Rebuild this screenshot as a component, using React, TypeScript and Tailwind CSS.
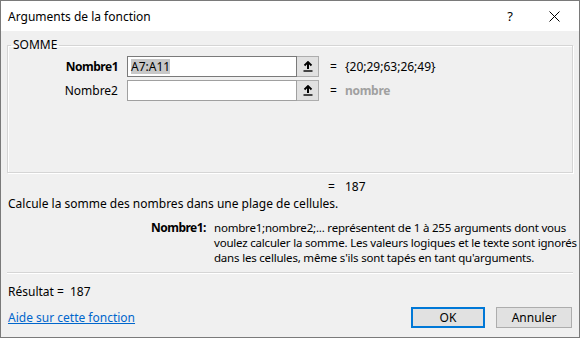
import React from "react";

function UploadIcon() {
  return (
    <svg width="10" height="11" viewBox="0 0 10 11" fill="none">
      <path d="M5 1 L5 8" stroke="#000" strokeWidth="2" />
      <path d="M1.5 4.5 L5 1 L8.5 4.5" stroke="#000" strokeWidth="1.8" fill="none" />
      <path d="M0.5 10 L9.5 10" stroke="#000" strokeWidth="1.4" />
    </svg>
  );
}

function ArgRow({ label, bold, value, selected, result, muted }: { label: string; bold?: boolean; value: string; selected?: boolean; result: string; muted?: boolean }) {
  return (
    <div className="flex items-center h-[21px]">
      <div className={`w-[110px] shrink-0 text-right ${bold ? "font-bold tracking-[-0.5px]" : ""}`}>{label}</div>
      <div className="ml-[9px] flex h-[21px]">
        <div className={`w-[170px] h-[21px] bg-white border ${selected ? "border-[#7a7a7a]" : "border-[#a0a0a0]"} flex items-center pl-[3px]`}>
          {value ? <span className="bg-[#c8c8c8] leading-[15px]">{value}</span> : null}
        </div>
        <div className="w-[22px] h-[21px] bg-[#e1e1e1] border border-[#adadad] border-l-0 flex items-center justify-center">
          <UploadIcon />
        </div>
      </div>
      <div className="ml-[11px] w-[15px]">=</div>
      <div className={muted ? "text-[#a0a0a0] font-bold tracking-[-0.3px]" : ""}>{result}</div>
    </div>
  );
}

export default function App() {
  return (
    <div className="w-[580px] h-[338px] bg-[#f0f0f0] border border-[#7a7a7a] flex flex-col text-[12px] text-black leading-[15px] font-['Noto_Sans',_'Open_Sans',_sans-serif] overflow-hidden">
      <div className="h-[30px] bg-white flex items-center justify-between shrink-0">
        <div className="pl-[7px] text-[12px]">Arguments de la fonction</div>
        <div className="flex items-center">
          <div className="w-[46px] text-center text-[13px]">?</div>
          <div className="w-[46px] flex justify-center pr-[4px]">
            <svg width="11" height="11" viewBox="0 0 11 11">
              <path d="M0.5 0.5 L10.5 10.5 M10.5 0.5 L0.5 10.5" stroke="#000" strokeWidth="1" />
            </svg>
          </div>
        </div>
      </div>
      <div className="flex-1 flex flex-col px-[6px]">
        <fieldset className="mt-[6px] h-[136px] border border-[#d5d5d5] shadow-[inset_1px_1px_0_#fff,1px_1px_0_#fff] px-0">
          <legend className="ml-[3px] px-[2px] leading-[16px]">SOMME</legend>
          <div className="flex flex-col gap-[3px] mt-[3px]">
            <ArgRow label="Nombre1" bold value="A7:A11" selected result="{20;29;63;26;49}" />
            <ArgRow label="Nombre2" value="" result="nombre" muted />
          </div>
        </fieldset>
        <div className="flex h-[16px] mt-[6px]">
          <div className="ml-[321px] w-[17px]">=</div>
          <div>187</div>
        </div>
        <div className="h-[16px] pl-[1px] mt-[1px]">Calcule la somme des nombres dans une plage de cellules.</div>
        <div className="flex mt-[8px]">
          <div className="w-[199px] shrink-0 text-right font-bold tracking-[-0.5px]">Nombre1:</div>
          <div className="ml-[8px] flex flex-col whitespace-nowrap text-[11.5px] tracking-[-0.2px]">
            <span>nombre1;nombre2;... représentent de 1 à 255 arguments dont vous</span>
            <span>voulez calculer la somme. Les valeurs logiques et le texte sont ignorés</span>
            <span>dans les cellules, même s'ils sont tapés en tant qu'arguments.</span>
          </div>
        </div>
        <div className="mt-[7px] h-[1px] bg-[#d5d5d5] border-b border-white box-content"></div>
        <div className="mt-[10px] flex pl-[1px]">
          <div className="w-[62px]">Résultat =</div>
          <div>187</div>
        </div>
        <div className="flex items-center justify-between mt-[8px]">
          <a className="pl-[1px] text-[#0066cc] underline">Aide sur cette fonction</a>
          <div className="flex gap-[11px] pr-[1px]">
            <div className="w-[74px] h-[21px] border-2 border-[#0078d7] bg-[#e1e1e1] flex items-center justify-center">OK</div>
            <div className="w-[76px] h-[21px] border border-[#adadad] bg-[#e1e1e1] flex items-center justify-center">Annuler</div>
          </div>
        </div>
      </div>
    </div>
  );
}
